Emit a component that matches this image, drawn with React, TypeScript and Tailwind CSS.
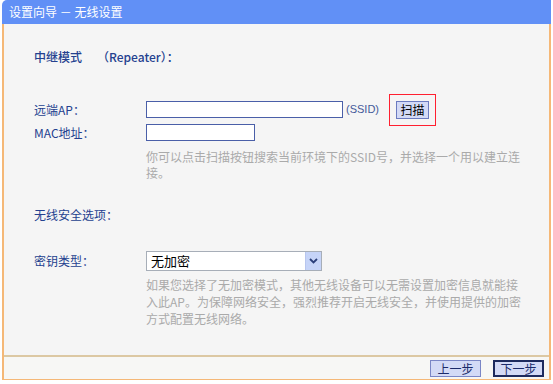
import React from "react";

const font = { fontFamily: '"Noto Sans CJK SC", "Noto Sans", sans-serif' };

export default function App() {
  return (
    <div className="w-[553px] h-[384px] bg-white text-[12px] overflow-hidden" style={font}>
      <div className="ml-[2px] w-[549px] flex flex-col">
        <div className="h-[24px] bg-[#6190f6] rounded-tl-[5px] text-white pl-[7px] leading-[24px] text-[12px]">
          设置向导 － 无线设置
        </div>
        <div className="border-l-2 border-r-2 border-b border-[#f5b877] bg-[#f5f5f5] flex flex-col">
          <div className="h-[331px] pl-[30px] pt-[23px] text-[#24418f] flex flex-col">
            <div className="h-[20px] flex items-center font-medium">
              <span>中继模式</span>
              <span className="ml-[15px]">（Repeater）：</span>
            </div>
            <div className="mt-[34px] h-[17px] flex items-center">
              <div className="w-[112px] shrink-0">远端AP：</div>
              <div className="w-[197px] h-[17px] shrink-0 bg-white border border-[#4a5fa8]" />
              <span className="ml-[3px] w-[43px] shrink-0 text-[11px] text-[#445a9a]" style={{ fontFamily: '"Liberation Sans", sans-serif' }}>(SSID)</span>
              <div className="shrink-0 -my-[7px] p-[6px] border border-[#ff2030]">
                <div className="h-[18px] w-[33px] bg-[#d3daf6] border border-[#6b7bc0] text-black text-[12px] flex items-center justify-center">
                  扫描
                </div>
              </div>
            </div>
            <div className="mt-[6px] h-[17px] flex items-center">
              <div className="w-[112px]">MAC地址：</div>
              <div className="w-[109px] h-[17px] bg-white border border-[#4a5fa8]" />
            </div>
            <div className="mt-[8px] ml-[112px] leading-[16px] text-[#aaaaaa] whitespace-nowrap">
              你可以点击扫描按钮搜索当前环境下的SSID号，并选择一个用以建立连
              <br />
              接。
            </div>
            <div className="mt-[24px] h-[20px] flex items-center">无线安全选项：</div>
            <div className="mt-[26px] h-[20px] flex items-center">
              <div className="w-[112px]">密钥类型：</div>
              <div className="w-[176px] h-[20px] bg-white border border-[#a7aeb8] flex items-center justify-between">
                <span className="pl-[4px] text-black text-[13px]">无加密</span>
                <div className="w-[16px] h-[18px] bg-[#c6d4f8] border-l border-[#b8c6ee] flex items-center justify-center">
                  <svg width="9" height="6" viewBox="0 0 9 6">
                    <path d="M1 1 L4.5 4.5 L8 1" stroke="#2b3f7a" strokeWidth="1.8" fill="none" />
                  </svg>
                </div>
              </div>
            </div>
            <div className="mt-[5px] ml-[112px] leading-[17px] text-[#aaaaaa] whitespace-nowrap">
              如果您选择了无加密模式，其他无线设备可以无需设置加密信息就能接
              <br />
              入此AP。为保障网络安全，强烈推荐开启无线安全，并使用提供的加密
              <br />
              方式配置无线网络。
            </div>
          </div>
          <div className="border-t-2 border-[#dcc8a3] h-[24px] bg-[#f7f7f5] flex items-center justify-end pr-[5px] gap-[12px]">
            <button className="w-[51px] h-[17px] bg-[#d3daf6] border border-[#7a86c6] text-[#1b2a6a] text-[12px] leading-[15px]">
              上一步
            </button>
            <button className="w-[51px] h-[17px] bg-[#d3daf6] border-2 border-[#1d2a5e] text-[#1b2a6a] text-[12px] leading-[13px]">
              下一步
            </button>
          </div>
        </div>
      </div>
    </div>
  );
}
